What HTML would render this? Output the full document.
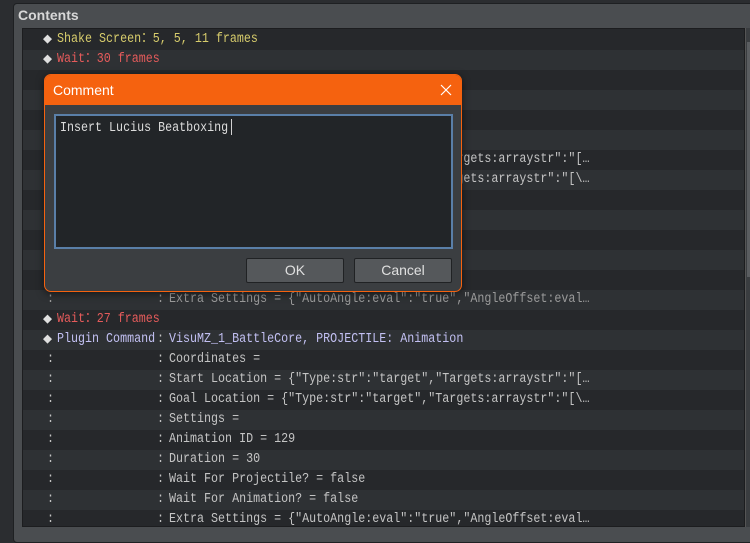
<!DOCTYPE html>
<html><head><meta charset="utf-8"><style>
*{margin:0;padding:0;box-sizing:border-box}
body{width:750px;height:532px;background:#2b2d30;overflow:hidden;position:relative;font-family:"Liberation Mono","DejaVu Sans Mono",monospace}
.panel{position:absolute;left:13px;top:3px;width:750px;height:540px;background:#4a4d50;border:1px solid #1e2022;border-radius:4px}
.title{position:absolute;left:18px;top:7px;font:bold 14px "Liberation Sans",sans-serif;color:#d8d8d8}
.list{position:absolute;left:22px;top:28px;width:723px;height:499px;background:#26282b;border:1px solid #1c1d1f;overflow:hidden}
.row{position:absolute;left:0;width:723px;height:20px;font-size:13.5px;line-height:20px;white-space:pre;color:#c4c4c4}
.row span{transform:scaleX(.865);transform-origin:0 50%}
.row:nth-child(even){background:#2e3134}
.d{position:absolute;left:20px;color:#e0e0e0;font-size:15px;transform:none!important}
.t{position:absolute;left:34px}
.c1{position:absolute;left:24px}
.c2{position:absolute;left:134px}
.tx{position:absolute;left:146px}
.y{color:#d7cc6c}.r{color:#e55b5b}.p{color:#c2c0f2}.g{color:#9a9a9a}
.sb{position:absolute;left:745px;top:28px;width:5px;height:499px;background:#3a3d40;border-left:1px solid #555}
.sb i{position:absolute;left:1px;top:14px;width:4px;height:235px;background:#5a5d60}
.dlg{position:absolute;left:44px;top:74px;width:418px;height:218px;background:#3b3e41;border:1px solid #f5620f;border-radius:7px;overflow:hidden;box-shadow:0 2px 8px rgba(0,0,0,.5)}
.bar{height:30px;background:#f5620f;color:#fff;font:14px "Liberation Sans",sans-serif;line-height:30px;padding-left:8px;position:relative}
.x{position:absolute;right:9px;top:9px;width:12px;height:12px}
.ta{position:absolute;left:9px;top:39px;width:399px;height:135px;background:#222528;border:2px solid #5a7fa8;font-size:13.5px;color:#dcdcdc;padding:3px 4px;white-space:pre}
.ta span{display:inline-block;transform:scaleX(.865);transform-origin:0 50%}
.cur{display:inline-block;width:1px;height:16px;background:#eee;vertical-align:middle;margin-left:-23px}
.btn{position:absolute;top:183px;width:98px;height:25px;background:#55585b;border:1px solid #202224;border-radius:2px;color:#e0e0e0;font:14px "Liberation Sans",sans-serif;text-align:center;line-height:23px}
</style></head><body>
<div class="panel"></div>
<div class="title">Contents</div>
<div class="list">
<div class="row" style="top:1px"><span class="d">◆</span><span class="t y">Shake Screen：5, 5, 11 frames</span></div>
<div class="row" style="top:21px"><span class="d">◆</span><span class="t r">Wait：30 frames</span></div>
<div class="row" style="top:41px"></div>
<div class="row" style="top:61px"></div>
<div class="row" style="top:81px"></div>
<div class="row" style="top:101px"></div>
<div class="row" style="top:121px"><span class="tx">Start Location = {"Type:str":"target","Targets:arraystr":"[…</span></div>
<div class="row" style="top:141px"><span class="tx">Goal Location = {"Type:str":"target","Targets:arraystr":"[\…</span></div>
<div class="row" style="top:161px"></div>
<div class="row" style="top:181px"></div>
<div class="row" style="top:201px"></div>
<div class="row" style="top:221px"></div>
<div class="row" style="top:241px"></div>
<div class="row g" style="top:261px"><span class="c1">:</span><span class="c2">:</span><span class="tx">Extra Settings = {"AutoAngle:eval":"true","AngleOffset:eval…</span></div>
<div class="row" style="top:281px"><span class="d">◆</span><span class="t r">Wait：27 frames</span></div>
<div class="row" style="top:301px"><span class="d">◆</span><span class="t p">Plugin Command</span><span class="c2">:</span><span class="tx p">VisuMZ_1_BattleCore, PROJECTILE: Animation</span></div>
<div class="row" style="top:321px"><span class="c1">:</span><span class="c2">:</span><span class="tx">Coordinates =</span></div>
<div class="row" style="top:341px"><span class="c1">:</span><span class="c2">:</span><span class="tx">Start Location = {"Type:str":"target","Targets:arraystr":"[…</span></div>
<div class="row" style="top:361px"><span class="c1">:</span><span class="c2">:</span><span class="tx">Goal Location = {"Type:str":"target","Targets:arraystr":"[\…</span></div>
<div class="row" style="top:381px"><span class="c1">:</span><span class="c2">:</span><span class="tx">Settings =</span></div>
<div class="row" style="top:401px"><span class="c1">:</span><span class="c2">:</span><span class="tx">Animation ID = 129</span></div>
<div class="row" style="top:421px"><span class="c1">:</span><span class="c2">:</span><span class="tx">Duration = 30</span></div>
<div class="row" style="top:441px"><span class="c1">:</span><span class="c2">:</span><span class="tx">Wait For Projectile? = false</span></div>
<div class="row" style="top:461px"><span class="c1">:</span><span class="c2">:</span><span class="tx">Wait For Animation? = false</span></div>
<div class="row" style="top:481px"><span class="c1">:</span><span class="c2">:</span><span class="tx">Extra Settings = {"AutoAngle:eval":"true","AngleOffset:eval…</span></div>
</div>
<div class="sb"><i></i></div>
<div class="dlg">
<div class="bar">Comment<svg class="x" viewBox="0 0 12 12"><path d="M1 1L11 11M11 1L1 11" stroke="#fff" stroke-width="1.2" fill="none"/></svg></div>
<div class="ta"><span>Insert Lucius Beatboxing</span><span class="cur"></span></div>
<div class="btn" style="left:201px">OK</div>
<div class="btn" style="left:309px">Cancel</div>
</div>
</body></html>
